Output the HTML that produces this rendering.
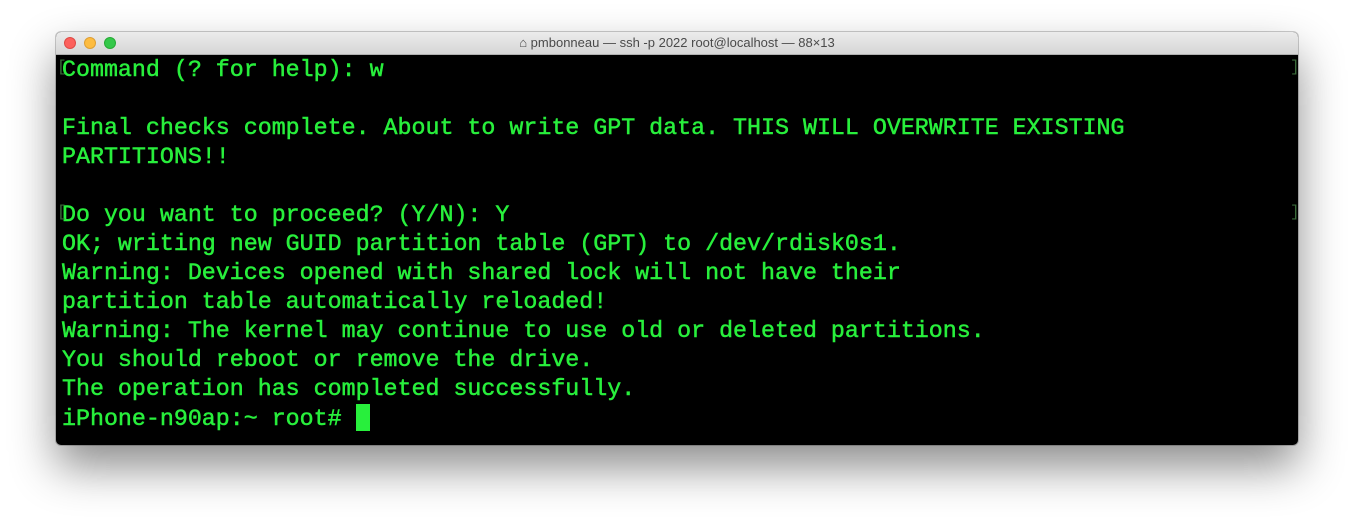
<!DOCTYPE html>
<html><head><style>
body{margin:0;width:1354px;height:526px;background:#fff;position:relative;overflow:hidden}
.win{position:absolute;left:56px;top:32px;width:1242px;height:413px;border-radius:5px;background:#000;box-shadow:0 22px 45px rgba(0,0,0,.45),0 0 0 1px rgba(0,0,0,.2);overflow:hidden}
.tb{height:22px;background:linear-gradient(#ececec,#d6d6d6);border-bottom:1px solid #b0b0b0;position:relative;font-family:"Liberation Sans",sans-serif;font-size:13px;color:#4a4a4a;text-align:center;line-height:22px}
.d{position:absolute;top:5px;width:12px;height:12px;border-radius:50%}
pre{margin:0;position:absolute;left:6px;top:24px;font-family:"Liberation Mono",monospace;font-size:23.3px;line-height:29px;color:#28ef3c;-webkit-text-stroke:0.5px #28ef3c;white-space:pre}
.cur{display:inline-block;width:14px;height:27px;background:#28ef3c;vertical-align:-6px}
.br{position:absolute;color:#3a6a3a;font-family:"Liberation Mono",monospace;font-size:16px}
</style></head><body>
<div class="win">
<div class="tb"><span class="d" style="left:8px;background:#fc605c;border:1px solid #de4a45;box-sizing:border-box"></span><span class="d" style="left:28px;background:#fdbc40;border:1px solid #de9f34;box-sizing:border-box"></span><span class="d" style="left:48px;background:#34c84a;border:1px solid #27aa35;box-sizing:border-box"></span>⌂ pmbonneau — ssh -p 2022 root@localhost — 88×13</div>
<pre>Command (? for help): w

Final checks complete. About to write GPT data. THIS WILL OVERWRITE EXISTING
PARTITIONS!!

Do you want to proceed? (Y/N): Y
OK; writing new GUID partition table (GPT) to /dev/rdisk0s1.
Warning: Devices opened with shared lock will not have their
partition table automatically reloaded!
Warning: The kernel may continue to use old or deleted partitions.
You should reboot or remove the drive.
The operation has completed successfully.
iPhone-n90ap:~ root# <span class="cur"></span></pre>
<span class="br" style="left:1px;top:26px">[</span><span class="br" style="left:1234px;top:26px">]</span>
<span class="br" style="left:1px;top:171px">[</span><span class="br" style="left:1234px;top:171px">]</span>
</div>
</body></html>
